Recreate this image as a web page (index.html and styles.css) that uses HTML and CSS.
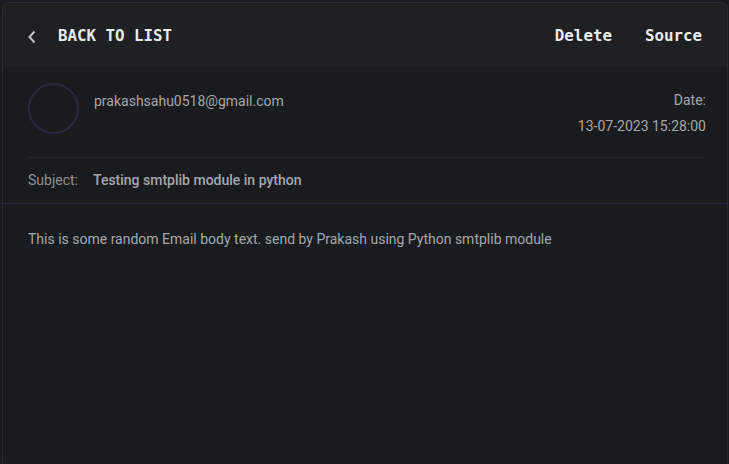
FILE: index.html
```html
<!DOCTYPE html>
<html>
<head>
<meta charset="utf-8">
<link rel="stylesheet" href="styles.css">
</head>
<body>
<div class="card">
  <header class="topbar">
    <div class="back">
      <svg class="chev" width="10" height="14" viewBox="0 0 10 14"><path d="M7.5 1.5 L2.5 7 L7.5 12.5" fill="none" stroke="#c1c2c5" stroke-width="2"/></svg>
      <span class="btn-text">BACK TO LIST</span>
    </div>
    <div class="actions">
      <span class="btn-text">Delete</span>
      <span class="btn-text">Source</span>
    </div>
  </header>
  <section class="meta">
    <div class="row">
      <div class="from">
        <div class="avatar"></div>
        <div class="email">prakashsahu0518@gmail.com</div>
      </div>
      <div class="date">
        <div>Date:</div>
        <div>13-07-2023 15:28:00</div>
      </div>
    </div>
    <div class="divider"></div>
    <div class="subject">
      <span class="label">Subject:</span>
      <span class="value">Testing smtplib module in python</span>
    </div>
  </section>
  <section class="body">This is some random Email body text. send by Prakash using Python smtplib module</section>
</div>
</body>
</html>
```
FILE: styles.css
```css
html, body {
  margin: 0;
  padding: 0;
  background: #1a1b1e;
  height: 100%;
  overflow: hidden;
}
body {
  font-family: Roboto, "Liberation Sans", sans-serif;
  font-size: 14px;
  line-height: 20px;
  color: #a6a7ab;
}
.card {
  margin: 2px 1px 0 2px;
  border: 1px solid #2b2843;
  border-bottom: none;
  border-radius: 8px 8px 0 0;
  height: calc(100vh - 3px);
  box-sizing: border-box;
  background: #1a1b1e;
  overflow: hidden;
}
.topbar {
  height: 64px;
  box-sizing: border-box;
  background: #1f2023;
  display: flex;
  align-items: center;
  justify-content: space-between;
  padding: 2px 24px 0 24px;
}
.back {
  display: flex;
  align-items: center;
}
.chev {
  margin-right: 21px;
  margin-top: 1px;
}
.btn-text {
  font-family: "DejaVu Sans Mono", monospace;
  font-weight: bold;
  font-size: 15.8px;
  color: #e9ecef;
}
.actions {
  display: flex;
  gap: 33px;
  margin-right: 1px;
}
.meta {
  padding: 16px 21px 0 25px;
  border-bottom: 1px solid #2b2843;
}
.row {
  display: flex;
  justify-content: space-between;
}
.from {
  display: flex;
  gap: 15px;
}
.avatar {
  width: 47px;
  height: 47px;
  border: 2px solid #2b2843;
  border-radius: 50%;
}
.email {
  margin-top: 8px;
}
.date {
  text-align: right;
  margin-top: 7px;
  display: flex;
  flex-direction: column;
  gap: 6px;
}
.divider {
  height: 1px;
  background: #26272b;
  margin-top: 21px;
}
.subject {
  display: flex;
  padding: 12px 0 13px;
}
.label {
  width: 65px;
  color: #909296;
}
.value {
  font-weight: 500;
  color: #a6a7ab;
}
.body {
  padding: 25px 25px;
}
```
